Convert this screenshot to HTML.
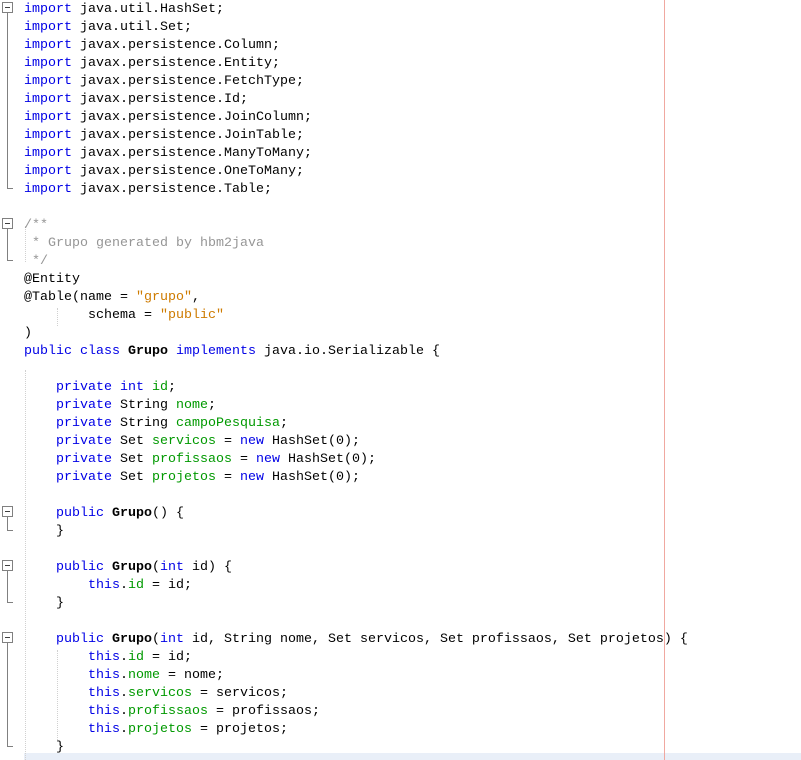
<!DOCTYPE html>
<html><head><meta charset="utf-8"><style>
html,body{margin:0;padding:0;background:#fff;width:801px;height:760px;overflow:hidden;position:relative}
#code{position:absolute;left:24px;top:1px;margin:0;font-family:"Liberation Mono",monospace;font-size:13.33px;line-height:18px;color:#000;white-space:pre}
.k{color:#0000e6}.f{color:#009900}.s{color:#ce7b00}.c{color:#969696}b{font-weight:bold}
.hl{position:absolute;left:24px;top:753px;width:777px;height:7px;background:#e9eff8}
.margin{position:absolute;left:664px;top:0;width:1px;height:760px;background:#f0a8a0}
.guide{position:absolute;border-left:1px dotted #d0d0d0;width:0}
.box{position:absolute;left:2px;width:9px;height:9px;border:1px solid #808080;background:#fff}
.box:after{content:"";position:absolute;left:2px;top:4px;width:5px;height:1px;background:#404040}
.vl{position:absolute;left:7px;width:1px;background:#808080}
.hz{position:absolute;left:7px;width:6px;height:1px;background:#808080}
</style></head><body>
<div class="hl"></div>
<div class="guide" style="left:25px;top:370px;height:390px"></div>
<div class="guide" style="left:25px;top:226px;height:36px"></div>
<div class="guide" style="left:57px;top:650px;height:90px"></div>
<div class="guide" style="left:57px;top:308px;height:18px"></div>
<div class="margin"></div>
<div class="box" style="top:2px"></div><div class="vl" style="top:13px;height:175px"></div><div class="hz" style="top:188px"></div>
<div class="box" style="top:218px"></div><div class="vl" style="top:229px;height:31px"></div><div class="hz" style="top:260px"></div>
<div class="box" style="top:506px"></div><div class="vl" style="top:517px;height:13px"></div><div class="hz" style="top:530px"></div>
<div class="box" style="top:560px"></div><div class="vl" style="top:571px;height:31px"></div><div class="hz" style="top:602px"></div>
<div class="box" style="top:632px"></div><div class="vl" style="top:643px;height:103px"></div><div class="hz" style="top:746px"></div>
<pre id="code"><span class="k">import</span> java.util.HashSet;
<span class="k">import</span> java.util.Set;
<span class="k">import</span> javax.persistence.Column;
<span class="k">import</span> javax.persistence.Entity;
<span class="k">import</span> javax.persistence.FetchType;
<span class="k">import</span> javax.persistence.Id;
<span class="k">import</span> javax.persistence.JoinColumn;
<span class="k">import</span> javax.persistence.JoinTable;
<span class="k">import</span> javax.persistence.ManyToMany;
<span class="k">import</span> javax.persistence.OneToMany;
<span class="k">import</span> javax.persistence.Table;

<span class="c">/**
 * Grupo generated by hbm2java
 */</span>
@Entity
@Table(name = <span class="s">"grupo"</span>,
        schema = <span class="s">"public"</span>
)
<span class="k">public</span> <span class="k">class</span> <b>Grupo</b> <span class="k">implements</span> java.io.Serializable {

    <span class="k">private</span> <span class="k">int</span> <span class="f">id</span>;
    <span class="k">private</span> String <span class="f">nome</span>;
    <span class="k">private</span> String <span class="f">campoPesquisa</span>;
    <span class="k">private</span> Set <span class="f">servicos</span> = <span class="k">new</span> HashSet(0);
    <span class="k">private</span> Set <span class="f">profissaos</span> = <span class="k">new</span> HashSet(0);
    <span class="k">private</span> Set <span class="f">projetos</span> = <span class="k">new</span> HashSet(0);

    <span class="k">public</span> <b>Grupo</b>() {
    }

    <span class="k">public</span> <b>Grupo</b>(<span class="k">int</span> id) {
        <span class="k">this</span>.<span class="f">id</span> = id;
    }

    <span class="k">public</span> <b>Grupo</b>(<span class="k">int</span> id, String nome, Set servicos, Set profissaos, Set projetos) {
        <span class="k">this</span>.<span class="f">id</span> = id;
        <span class="k">this</span>.<span class="f">nome</span> = nome;
        <span class="k">this</span>.<span class="f">servicos</span> = servicos;
        <span class="k">this</span>.<span class="f">profissaos</span> = profissaos;
        <span class="k">this</span>.<span class="f">projetos</span> = projetos;
    }
</pre>
</body></html>
